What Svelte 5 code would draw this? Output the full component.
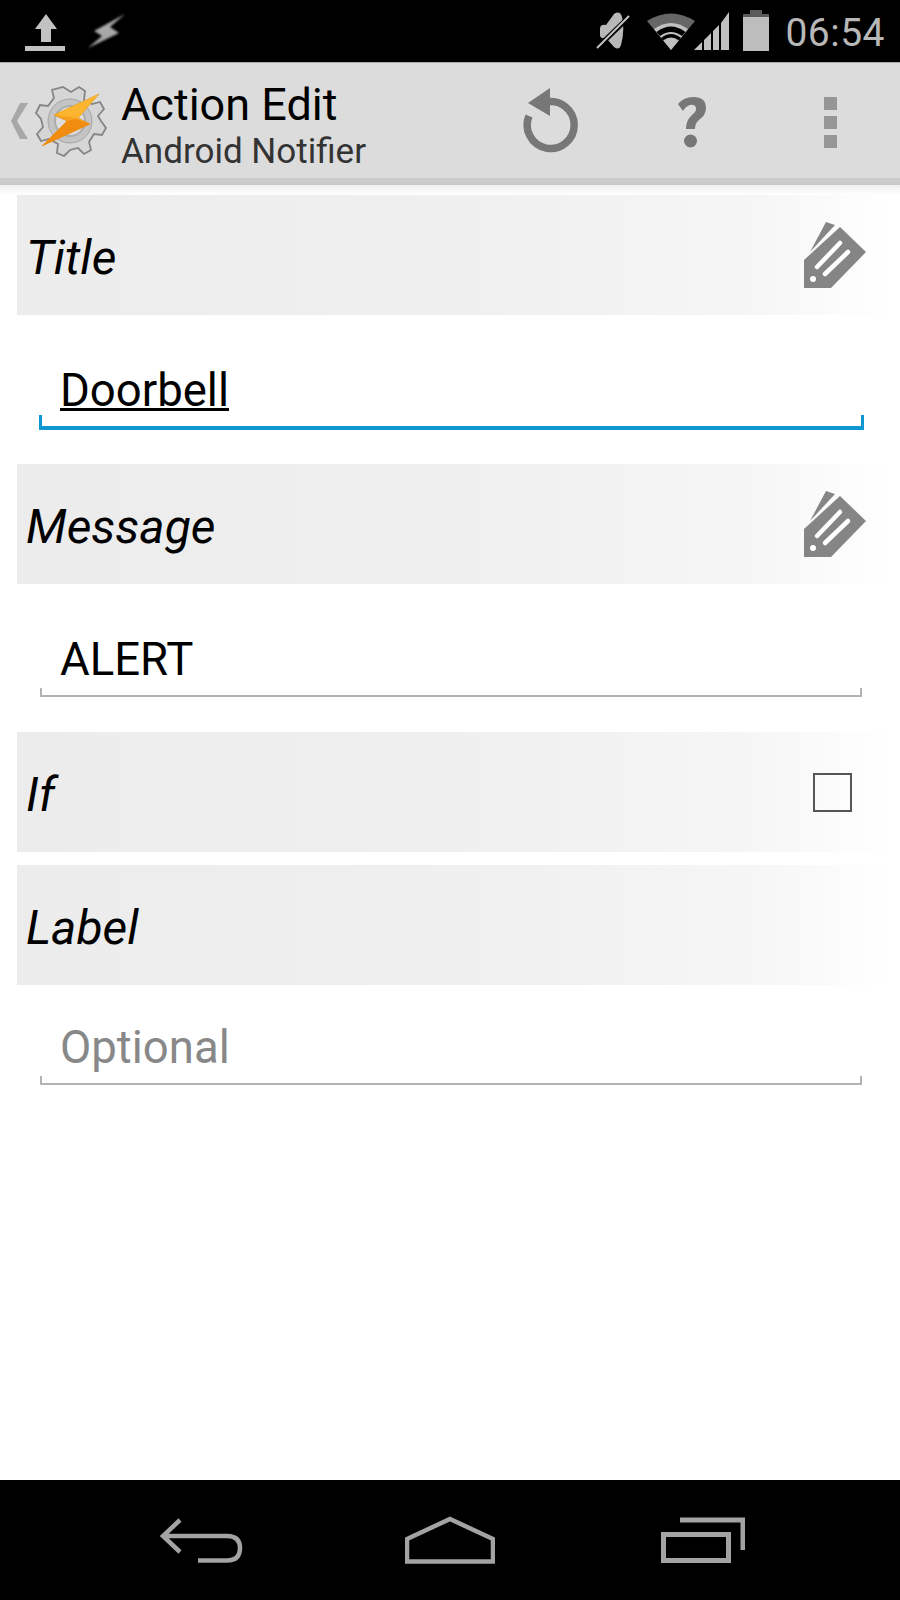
<script lang="ts">
  const sections = [
    { label: 'Title', value: 'Doorbell', control: 'edit', focused: true },
    { label: 'Message', value: 'ALERT', control: 'edit' },
    { label: 'If', control: 'check' },
    { label: 'Label', placeholder: 'Optional' },
  ]
</script>

<div class="screen">
  <div class="status">
    <div class="status-left">
      <svg width="44" height="42" viewBox="0 0 44 42"><path d="M22 4 L33 19 H27 V32 H17 V19 H11 Z M1 36 H41 V41 H1 Z" fill="#c2c2c2"/></svg>
      <svg class="s-bolt" width="44" height="40" viewBox="0 0 44 40"><path d="M40 3 L9 20 L17 25 L3 37 L34 22 L25 16 Z" fill="#a8a8a8" class="blurred"/></svg>
    </div>
    <div class="status-right">
      <svg width="36" height="40" viewBox="0 0 36 40"><path d="M4 18 Q4 13 10 14 L18 3 Q24 -1 26 6 Q29 20 25 34 Q23 40 18 36 L10 27 Q4 28 4 24 Z" fill="#b8b8b8"/><path d="M1 37 L34 5" stroke="#000" stroke-width="5"/><path d="M1 37 L33 5" stroke="#c4c4c4" stroke-width="2"/></svg>
      <svg class="s-wifi" width="50" height="40" viewBox="0 0 50 40"><path d="M1 10 Q25 -5 49 10 L25 39 Z" fill="#666"/><path d="M8 18 Q25 6 42 18 L25 39 Z" fill="#c0c0c0"/><path d="M10.500 21 Q25 10 39.500 21 L36 25 Q25 17 14 25 Z" fill="#000"/><path d="M17 29.500 Q25 23.500 33 29.500 L35 27 Q25 19 15 27 Z" fill="#000"/></svg>
      <svg class="s-signal" width="36" height="40" viewBox="0 0 36 40"><path d="M1 39 L9 31 V39 Z M11 39 V29 L18 22 V39 Z M20 39 V20 L26 14 V39 Z M28 39 V12 L36 1 V39 Z" fill="#c0c0c0"/></svg>
      <svg class="s-batt" width="28" height="42" viewBox="0 0 28 42"><path d="M8 0 H20 V4 H27 V41 H1 V4 H8 Z" fill="#5a5a5a"/><path d="M1 7 H27 V41 H1 Z" fill="#bdbdbd"/></svg>
      <span class="clock">06:54</span>
    </div>
  </div>

  <header class="bar">
    <div class="bar-left">
      <svg class="chev" width="18" height="36" viewBox="0 0 18 36"><path d="M17 0 L6 18 L17 36 H9 L0 18 L9 0 Z" fill="#a8a8a8"/></svg>
      <svg class="logo" width="72" height="72" viewBox="0 0 72 72">
        <path d="M28 2 L36 7 L44 2 L50 6 L49 15 L57 19 L65 17 L69 24 L63 31 L66 36 L71 43 L67 50 L59 49 L54 57 L56 65 L49 69 L43 63 L35 65 L29 71 L22 68 L23 59 L14 54 L6 56 L2 49 L8 42 L6 34 L1 28 L5 20 L13 21 L19 13 L17 5 Z" fill="#d6d6d6" stroke="#858585" stroke-width="1.800"/>
        <circle cx="35" cy="36" r="22" fill="#c4c4c4" stroke="#a4a4a4" stroke-width="1"/>
        <circle cx="35" cy="36" r="15" fill="#dcdcdc" stroke="#acacac" stroke-width="2"/>
        <path d="M64 9 L19 30 L32 36 L7 61 L55 39 L43 33 Z" fill="#f9a21e" stroke="#e08a10" stroke-width="0.600"/>
        <path d="M32 36 L7 61 L55 39 L40 34 Z" fill="#f08c10"/>
        <path d="M64 9 L19 30 L43 33 Z" fill="#fcb52f"/>
      </svg>
      <div class="titles">
        <div class="title">Action Edit</div>
        <div class="subtitle">Android Notifier</div>
      </div>
    </div>
    <div class="actions">
      <svg class="a-reload" width="60" height="70" viewBox="0 0 60 70"><path d="M24 16 A23.500 23.500 0 1 1 7 30" fill="none" stroke="#777" stroke-width="7.500"/><path d="M28 2 V30 L6 17 Z" fill="#777"/></svg>
      <svg class="a-help" width="34" height="56" viewBox="0 0 34 56"><path d="M3 9 Q9 2 18 2 Q31 2 31 13 Q31 20 24 25 Q20 28 20 34 H11 Q11 25 17 20 Q22 16 21 13 Q20 9 15 10 Q11 11 8 16 Z" fill="#777"/><circle cx="15.500" cy="46" r="6.500" fill="#777"/></svg>
      <div class="more"><i></i><i></i><i></i></div>
    </div>
  </header>
  <div class="bar-shadow"></div>

  <main class="content">
    {#each sections as s}
      <section class:noinput={s.control === 'check'}>
        <div class="head">
          <span class="label">{s.label}</span>
          {#if s.control === 'edit'}
            <svg class="tag" width="64" height="66" viewBox="0 0 64 66">
              <path d="M22 0 L31 3 L6 30 Z" fill="#858585"/>
              <path d="M36 5 L62 30 L27 66 H0 V38 Z" fill="#858585"/>
              <path d="M13 45 L36 21 M21 52 L44 30" stroke="#fff" stroke-width="4.500" stroke-linecap="round"/>
              <circle cx="9" cy="57" r="3" fill="#fff"/>
            </svg>
          {:else if s.control === 'check'}
            <span class="check"></span>
          {/if}
        </div>
        {#if s.control !== 'check'}
          <div class="field" class:focused={s.focused} class:empty={!s.value}>
            <span class="val" class:under={s.focused}>{s.value ?? s.placeholder}</span>
          </div>
        {/if}
      </section>
    {/each}
  </main>

  <nav class="nav">
    <svg width="84" height="46" viewBox="0 0 84 46"><path d="M21 3 L4 19 L21 35 M4 19 H68 Q81 19 81 31 Q81 43.500 68 43.500 H39" fill="none" stroke="#a3a3a3" stroke-width="4.500"/></svg>
    <svg width="90" height="48" viewBox="0 0 90 48"><path d="M45 3 L88 23 V45.500 H2 V23 Z" fill="none" stroke="#a3a3a3" stroke-width="4.500"/></svg>
    <svg class="n-recent" width="84" height="46" viewBox="0 0 84 46"><path d="M19 3 H82 V33" fill="none" stroke="#a3a3a3" stroke-width="5"/><rect x="2.500" y="17.500" width="65" height="26" fill="none" stroke="#a3a3a3" stroke-width="5"/></svg>
  </nav>
</div>

<style>
  :global(body) { margin: 0; background: #fff; }

  .screen {
    width: 900px;
    height: 1600px;
    display: flex;
    flex-direction: column;
    font-family: Roboto, sans-serif;
    color: #000;
    overflow: hidden;
  }

  .status {
    height: 62px;
    background: #000;
    display: flex;
    justify-content: space-between;
    align-items: center;
    padding: 0 15px 0 24px;
    box-sizing: border-box;
    flex: none;
  }
  .status-left { display: flex; align-items: center; gap: 17px; }
  .status-right { display: flex; align-items: center; }
  .blurred { filter: blur(1px); }
  .s-wifi { margin-left: 14px; }
  .s-signal { margin-left: -3px; }
  .s-batt { margin-left: 13px; }
  .clock { font-size: 39px; color: #b8b8b8; margin: 3px 0 0 15px; letter-spacing: 0.5px; }

  .bar {
    flex: none;
    height: 115px;
    background: #dcdcdc;
    border-top: 1px solid #aaa;
    display: flex;
    align-items: center;
    justify-content: space-between;
  }
  .bar-left { display: flex; align-items: center; padding-left: 11px; }
  .logo { margin-left: 6px; }
  .titles { margin-left: 14px; padding-top: 11px; }
  .title { font-size: 45px; line-height: 50px; }
  .subtitle { font-size: 35px; line-height: 43px; color: #333; }
  .actions { display: flex; align-items: center; }
  .a-reload { margin-right: 98px; }
  .a-help { margin: 4px -5px 0; }
  .more {
    display: flex;
    flex-direction: column;
    gap: 6px;
    margin: 4px 63px 0 120px;
  }
  .more i { display: block; width: 13px; height: 13px; background: #969696; }

  .bar-shadow {
    flex: none;
    height: 17px;
    background: linear-gradient(#cbcbcb 0 7px, #efefef 7px, #fff);
  }

  .content { flex: 1; padding-left: 17px; }

  section { display: flex; flex-direction: column; }
  section.noinput { margin-bottom: 13px; }

  .head {
    height: 120px;
    display: flex;
    align-items: center;
    justify-content: space-between;
    padding: 0 13px 0 9px;
    margin-right: 10px;
    background: linear-gradient(90deg, #ececec, #f0f0f0 55%, #f6f6f6 85%, #fff);
    box-sizing: border-box;
  }
  .label { font-size: 48px; font-style: italic; padding-top: 4px; }
  .tag { margin-right: 9px; }
  .check {
    width: 39px;
    height: 39px;
    border: 2px solid #555;
    box-sizing: border-box;
    margin-right: 25px;
  }

  .field {
    margin: 52px 38px 35px 23px;
    height: 59px;
    padding-left: 18px;
    border: solid #b3b3b3;
    border-width: 0 2px 2px;
    border-image: linear-gradient(transparent 0 calc(100% - 8px), #b3b3b3 calc(100% - 8px)) 1;
    font-size: 45.5px;
    line-height: 48px;
    white-space: nowrap;
  }
  section:last-child .field { margin-top: 39px; }
  .field.focused {
    margin: 52px 36px 34px 22px;
    border-width: 0 3px 4px;
    border-image: linear-gradient(transparent 0 calc(100% - 12px), #0e97d1 calc(100% - 12px)) 1;
  }
  .field.empty { color: #888; }
  .under {
    text-decoration: underline 3px #000;
    text-underline-offset: 2px;
    text-decoration-skip-ink: none;
  }

  .nav {
    flex: none;
    height: 120px;
    background: #000;
    display: flex;
    align-items: center;
    justify-content: center;
    gap: 162px;
    box-sizing: border-box;
    padding-left: 3px;
  }
  .n-recent { margin-left: 4px; }
</style>
